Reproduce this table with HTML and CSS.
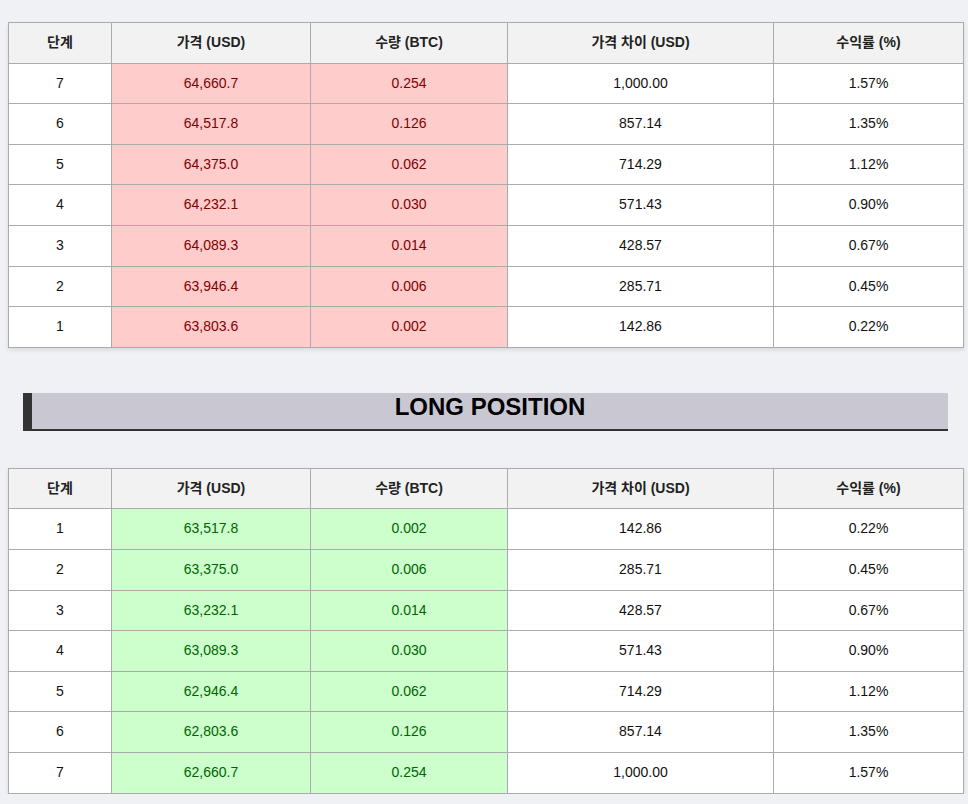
FILE: index.html
```html
<!DOCTYPE html>
<html lang="ko">
<head>
<meta charset="utf-8">
<title>Positions</title>
<link rel="stylesheet" href="styles.css">
</head>
<body>
<table class="grid">
  <colgroup>
    <col class="c1"><col class="c2"><col class="c3"><col class="c4"><col class="c5">
  </colgroup>
  <thead>
    <tr><th>단계</th><th>가격 (USD)</th><th>수량 (BTC)</th><th>가격 차이 (USD)</th><th>수익률 (%)</th></tr>
  </thead>
  <tbody>
    <tr><td>7</td><td class="red">64,660.7</td><td class="red">0.254</td><td>1,000.00</td><td>1.57%</td></tr>
    <tr><td>6</td><td class="red">64,517.8</td><td class="red">0.126</td><td>857.14</td><td>1.35%</td></tr>
    <tr><td>5</td><td class="red">64,375.0</td><td class="red">0.062</td><td>714.29</td><td>1.12%</td></tr>
    <tr><td>4</td><td class="red">64,232.1</td><td class="red">0.030</td><td>571.43</td><td>0.90%</td></tr>
    <tr><td>3</td><td class="red">64,089.3</td><td class="red">0.014</td><td>428.57</td><td>0.67%</td></tr>
    <tr><td>2</td><td class="red">63,946.4</td><td class="red">0.006</td><td>285.71</td><td>0.45%</td></tr>
    <tr><td>1</td><td class="red">63,803.6</td><td class="red">0.002</td><td>142.86</td><td>0.22%</td></tr>
  </tbody>
</table>

<h2 class="section">LONG POSITION</h2>

<table class="grid">
  <colgroup>
    <col class="c1"><col class="c2"><col class="c3"><col class="c4"><col class="c5">
  </colgroup>
  <thead>
    <tr><th>단계</th><th>가격 (USD)</th><th>수량 (BTC)</th><th>가격 차이 (USD)</th><th>수익률 (%)</th></tr>
  </thead>
  <tbody>
    <tr><td>1</td><td class="green">63,517.8</td><td class="green">0.002</td><td>142.86</td><td>0.22%</td></tr>
    <tr><td>2</td><td class="green">63,375.0</td><td class="green">0.006</td><td>285.71</td><td>0.45%</td></tr>
    <tr><td>3</td><td class="green">63,232.1</td><td class="green">0.014</td><td>428.57</td><td>0.67%</td></tr>
    <tr><td>4</td><td class="green">63,089.3</td><td class="green">0.030</td><td>571.43</td><td>0.90%</td></tr>
    <tr><td>5</td><td class="green">62,946.4</td><td class="green">0.062</td><td>714.29</td><td>1.12%</td></tr>
    <tr><td>6</td><td class="green">62,803.6</td><td class="green">0.126</td><td>857.14</td><td>1.35%</td></tr>
    <tr><td>7</td><td class="green">62,660.7</td><td class="green">0.254</td><td>1,000.00</td><td>1.57%</td></tr>
  </tbody>
</table>
</body>
</html>
```

FILE: styles.css
```css
html, body {
  margin: 0;
  padding: 0;
}
body {
  background: #f0f1f5;
  font-family: "Liberation Sans", "Noto Sans CJK KR", Arial, sans-serif;
  font-size: 14px;
  color: #111;
  padding: 22px 0 0 8px;
}
.grid {
  width: 955px;
  border-collapse: collapse;
  table-layout: fixed;
  background: #fff;
  box-shadow: 0 2px 4px rgba(0, 0, 0, 0.1);
}
.c1 { width: 103px; }
.c2 { width: 199px; }
.c3 { width: 197px; }
.c4 { width: 266px; }
.c5 { width: 190px; }
.grid th,
.grid td {
  border: 1px solid #ababab;
  text-align: center;
  padding: 12px 8px;
}
.grid th {
  background: #f2f2f2;
  color: #222;
  font-weight: bold;
  line-height: 15.6px;
  padding-top: 12px;
}
.grid td {
  line-height: 15.6px;
}
.grid td.red {
  background: #ffcccc;
  color: #800000;
}
.grid td.green {
  background: #ccffcc;
  color: #006400;
}
.section {
  margin: 45px 15px 37px 15px;
  width: 916px;
  background: #c9c8d2;
  border-left: 9px solid #333;
  border-bottom: 2px solid #333;
  padding: 0 0 8px;
  font-size: 24px;
  line-height: 28px;
  font-weight: bold;
  text-align: center;
  color: #000;
}
```
